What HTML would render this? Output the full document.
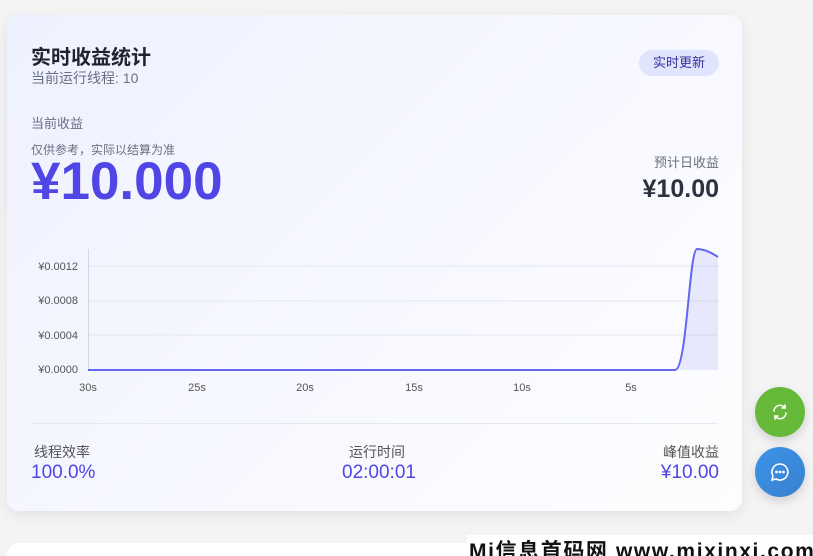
<!DOCTYPE html>
<html><head><meta charset="utf-8"><style>
html,body{margin:0;width:813px;height:556px;overflow:hidden}
body{background:#f4f4f5;font-family:"Liberation Sans","Noto Sans CJK SC",sans-serif;position:relative}
.card{position:absolute;left:7px;top:15px;width:735px;height:496px;border-radius:12px;background:linear-gradient(135deg,#eef1ff,#f8f9ff 60%,#fdfdff);box-shadow:0 4px 14px rgba(0,0,0,.08)}
.t{position:absolute;white-space:nowrap}
.card2{position:absolute;left:7px;top:543px;width:735px;height:40px;border-radius:12px;background:#fff}
.fab{position:absolute;left:755px;width:50px;height:50px;border-radius:50%;box-shadow:0 4px 10px rgba(0,0,0,.15)}
</style></head><body>
<div class="card">
<div class="t" style="left:24px;top:26px;font-size:20px;font-weight:bold;color:#1f2330">实时收益统计</div>
<div class="t" style="left:24px;top:53px;font-size:14px;color:#6b7080">当前运行线程: 10</div>
<div class="t" style="left:632px;top:35px;width:80px;height:26px;border-radius:13px;background:#e0e4fc;color:#3a2ea0;font-size:13px;line-height:26px;text-align:center">实时更新</div>
<div class="t" style="left:24px;top:98px;font-size:13px;color:#6b7080">当前收益</div>
<div class="t" style="left:24px;top:126px;font-size:12px;color:#6b7080">仅供参考，实际以结算为准</div>
<div class="t" style="left:24px;top:136px;font-size:53px;font-weight:bold;color:#4f46e5">¥10.000</div>
<div class="t" style="right:23px;top:137px;font-size:13px;color:#6b7080">预计日收益</div>
<div class="t" style="right:23px;top:160px;font-size:25px;font-weight:bold;color:#2d3240">¥10.00</div>
<svg style="position:absolute;left:0;top:0" width="735" height="420">
<g stroke="#e5e7ef" stroke-width="1"><line x1="81" y1="251" x2="711" y2="251"/><line x1="81" y1="286" x2="711" y2="286"/><line x1="81" y1="320" x2="711" y2="320"/></g>
<line x1="81.5" y1="234" x2="81.5" y2="355" stroke="#d4d6e0"/>
<path d="M81 355 L668 355 C680 355,682 235,690 234 C698 234,705 238,711 242 L711 355Z" fill="rgba(99,102,241,.12)"/>
<path d="M81 355 L668 355 C680 355,682 235,690 234 C698 234,705 238,711 242" fill="none" stroke="#6366f1" stroke-width="2"/>
<g font-size="11" fill="#555" text-anchor="end"><text x="71" y="255">¥0.0012</text><text x="71" y="289">¥0.0008</text><text x="71" y="324">¥0.0004</text><text x="71" y="358">¥0.0000</text></g>
<g font-size="11" fill="#555" text-anchor="middle"><text x="81" y="376">30s</text><text x="190" y="376">25s</text><text x="298" y="376">20s</text><text x="407" y="376">15s</text><text x="515" y="376">10s</text><text x="624" y="376">5s</text></g>
<line x1="24" y1="408.5" x2="711" y2="408.5" stroke="#e6e8f0"/>
</svg>
<div class="t" style="left:27px;top:427px;font-size:14px;color:#555">线程效率</div>
<div class="t" style="left:24px;top:447px;font-size:19px;color:#4f46e5">100.0%</div>
<div class="t" style="left:342px;top:427px;font-size:14px;color:#555">运行时间</div>
<div class="t" style="left:335px;top:447px;font-size:19px;color:#4f46e5">02:00:01</div>
<div class="t" style="right:23px;top:427px;font-size:14px;color:#555">峰值收益</div>
<div class="t" style="right:23px;top:447px;font-size:19px;color:#4f46e5">¥10.00</div>
</div>
<div class="card2"></div>
<div class="fab" style="top:387px;background:#67b939">
<svg width="50" height="50" viewBox="0 0 50 50" fill="none" stroke="#fff" stroke-width="1.6" stroke-linecap="round"><path d="M19 24a6 6 0 0 1 11-3"/><path d="M30 18v3h-3"/><path d="M31 26a6 6 0 0 1-11 3"/><path d="M20 32v-3h3"/></svg></div>
<div class="fab" style="top:447px;background:linear-gradient(135deg,#3d94e8,#3a7fd0)">
<svg width="50" height="50" viewBox="0 0 50 50" fill="none" stroke="#fff" stroke-width="1.6"><path d="M25 17a8 8 0 1 1-4 15l-4 1 1-4a8 8 0 0 1 7-12z"/><circle cx="21.5" cy="25" r=".6" fill="#fff"/><circle cx="25" cy="25" r=".6" fill="#fff"/><circle cx="28.5" cy="25" r=".6" fill="#fff"/></svg></div>
<div class="t" style="left:467px;top:535px;font-size:21px;font-weight:bold;color:#111;background:#fff;padding:0 2px;letter-spacing:1.6px">Mi信息首码网 www.mixinxi.com</div>
</body></html>
